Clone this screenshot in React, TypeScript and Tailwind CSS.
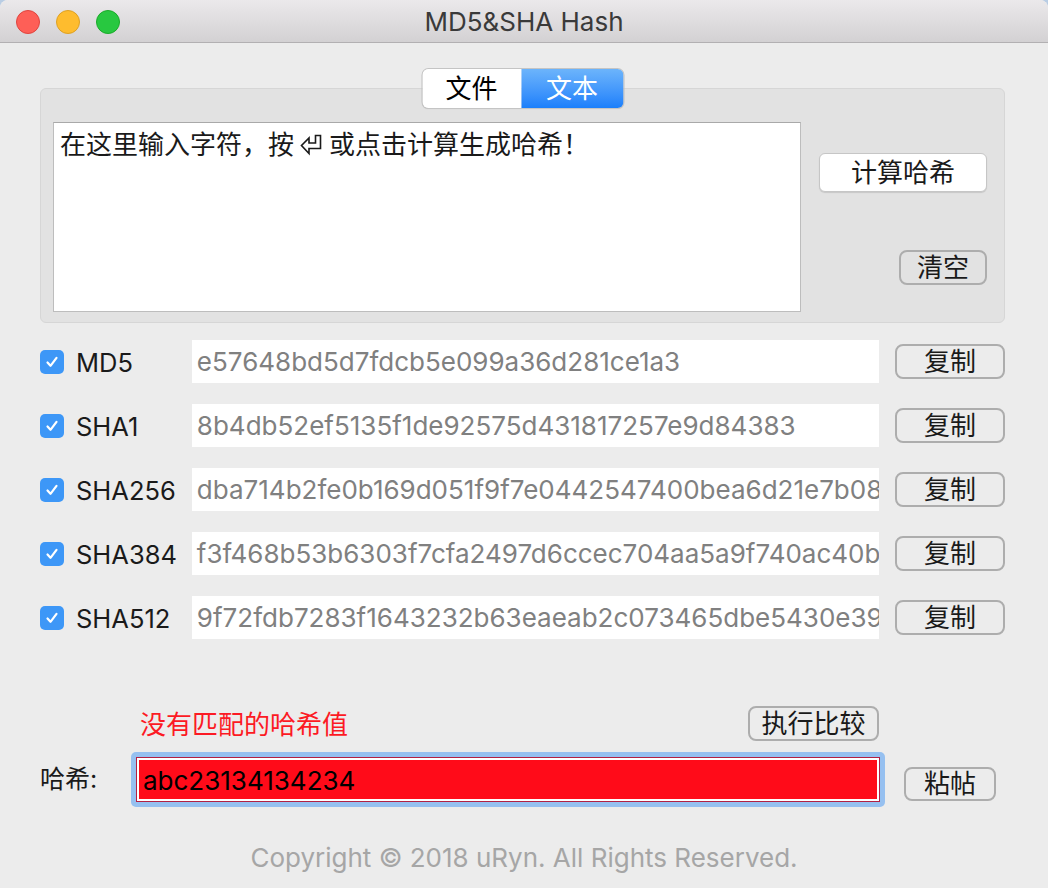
import React from "react";

const FONT = "font-['Inter','Noto_Sans_CJK_SC','DejaVu_Sans',sans-serif]";

function Check() {
  return (
    <div className="w-[24px] h-[24px] rounded-[5px] bg-[#3d97f7] flex items-center justify-center shrink-0">
      <svg width="16" height="16" viewBox="0 0 16 16" fill="none">
        <path d="M3.5 8.5 L6.5 11.8 L12.5 3.8" stroke="white" strokeWidth="2.2" strokeLinecap="round" strokeLinejoin="round" />
      </svg>
    </div>
  );
}

function ReturnGlyph() {
  return (
    <svg width="23" height="22" viewBox="0 0 23 22" fill="none" className="inline-block align-[-2px] mx-[6px]">
      <path d="M15.5 1.5 H20.5 V14.5 H9 V19.5 L1.5 11.5 L9 4 V9 H15.5 Z" stroke="#1a1a1a" strokeWidth="1.6" strokeLinejoin="miter" />
    </svg>
  );
}

function GrayButton({ label, w, h }: { label: string; w: string; h: string }) {
  return (
    <div className={`${w} ${h} rounded-[8px] border-2 border-[#adadad] flex items-center justify-center text-[26px] text-[#1a1a1a] leading-none shrink-0`}>
      {label}
    </div>
  );
}

const rows = [
  ["MD5", "e57648bd5d7fdcb5e099a36d281ce1a3"],
  ["SHA1", "8b4db52ef5135f1de92575d431817257e9d84383"],
  ["SHA256", "dba714b2fe0b169d051f9f7e0442547400bea6d21e7b08"],
  ["SHA384", "f3f468b53b6303f7cfa2497d6ccec704aa5a9f740ac40bf"],
  ["SHA512", "9f72fdb7283f1643232b63eaeab2c073465dbe5430e39"],
];

export default function App() {
  return (
    <div className={`w-[1048px] h-[888px] bg-[#b9cde4] ${FONT}`}>
      <div className="w-full h-full bg-[#ececec] rounded-t-[8px] overflow-hidden flex flex-col">
        {/* title bar */}
        <div className="h-[43px] shrink-0 bg-gradient-to-b from-[#ebe9eb] to-[#d3d1d3] border-b border-[#b2b0b2] relative flex items-center justify-center">
          <div className="absolute left-[16px] top-[10px] flex gap-[16px]">
            <div className="w-[24px] h-[24px] rounded-full bg-[#fe5f57] border border-[#e0443e]" />
            <div className="w-[24px] h-[24px] rounded-full bg-[#febc2e] border border-[#dea123]" />
            <div className="w-[24px] h-[24px] rounded-full bg-[#28c840] border border-[#1aab29]" />
          </div>
          <div className="text-[26px] text-[#3a3a3a] leading-none pt-[2px]">MD5&amp;SHA Hash</div>
        </div>

        <div className="pl-[40px] pr-[43px] flex flex-col">
          {/* tab box */}
          <div className="mt-[45px] h-[235px] rounded-[6px] bg-[#e2e2e2] border border-[#d6d6d6] relative flex pl-[12px] pr-[17px] pt-[33px] pb-[10px]">
            <div className="absolute left-1/2 -translate-x-1/2 top-[-20px] flex h-[39px] rounded-[6px] shadow-[0_0_0_1px_#c4c4c4,0_1px_1px_rgba(0,0,0,0.15)] overflow-hidden">
              <div className="w-[99px] bg-white flex items-center justify-center text-[26px] text-black leading-none">文件</div>
              <div className="w-[102px] bg-gradient-to-b from-[#6cb4fb] to-[#1a7ffb] flex items-center justify-center text-[26px] text-white leading-none">文本</div>
            </div>
            <div className="w-[748px] h-[190px] bg-white border border-[#bdbdbd] border-t-[#a9a9a9] px-[6px] pt-[5px] text-[26px] text-[#1a1a1a] leading-[34px] whitespace-nowrap">
              在这里输入字符，按<ReturnGlyph />或点击计算生成哈希！
            </div>
            <div className="flex-1 flex flex-col items-end pt-[31px]">
              <div className="w-[168px] h-[39px] bg-white rounded-[6px] border border-[#c6c6c6] shadow-[0_1px_1px_rgba(0,0,0,0.12)] flex items-center justify-center text-[26px] text-[#1a1a1a] leading-none">
                计算哈希
              </div>
              <div className="mt-[58px]">
                <GrayButton label="清空" w="w-[88px]" h="h-[35px]" />
              </div>
            </div>
          </div>

          {/* hash rows */}
          <div className="mt-[17px] flex flex-col gap-[21px]">
            {rows.map(([name, val]) => (
              <div key={name} className="flex items-center h-[43px]">
                <Check />
                <div className="ml-[12px] w-[116px] text-[25.5px] text-[#1a1a1a] leading-none pt-[2px]">{name}</div>
                <div className="w-[688px] h-[43px] bg-white flex items-center pl-[5px] overflow-hidden whitespace-nowrap text-[26px] text-[#808080] leading-none">
                  {val}
                </div>
                <div className="ml-[16px]">
                  <GrayButton label="复制" w="w-[110px]" h="h-[35px]" />
                </div>
              </div>
            ))}
          </div>

          {/* compare area */}
          <div className="mt-[67px] flex items-center h-[35px] pl-[100px]">
            <div className="text-[26px] text-[#fc1a24] leading-none pt-[2px]">没有匹配的哈希值</div>
            <div className="ml-auto mr-[126px]">
              <GrayButton label="执行比较" w="w-[131px]" h="h-[35px]" />
            </div>
          </div>

          <div className="mt-[11px] flex items-center h-[55px]">
            <div className="w-[91px] text-[25px] text-[#1a1a1a] leading-none">哈希:</div>
            <div className="w-[754px] h-[55px] rounded-[5px] bg-[#96c0f0] p-[5px]">
              <div className="w-full h-full bg-[#b32043] p-[1px]">
                <div className="w-full h-full bg-white p-[2px]">
                  <div className="w-full h-full bg-[#ff0b19] flex items-center pl-[4px] text-[26px] text-black leading-none pt-[2px]">
                    abc23134134234
                  </div>
                </div>
              </div>
            </div>
            <div className="ml-[19px] mt-[9px]">
              <GrayButton label="粘帖" w="w-[92px]" h="h-[34px]" />
            </div>
          </div>
        </div>

        <div className="mt-[38px] text-center text-[26px] text-[#a6a6a6] leading-none">
          Copyright © 2018 uRyn. All Rights Reserved.
        </div>
      </div>
    </div>
  );
}
